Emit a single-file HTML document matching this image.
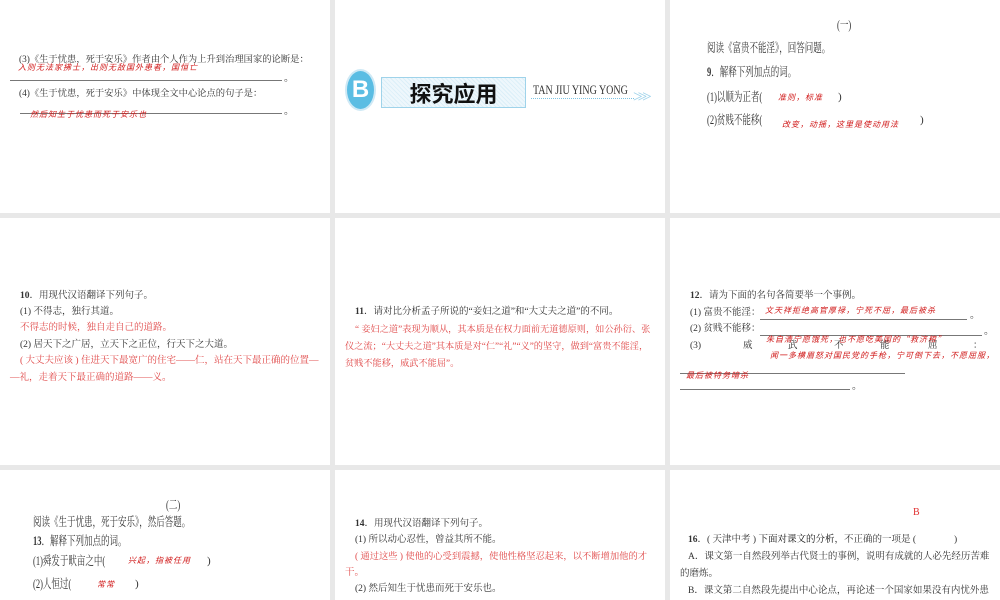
<!DOCTYPE html>
<html><head><meta charset="utf-8"><style>
*{margin:0;padding:0;box-sizing:border-box}
body{width:1000px;height:600px;background:#e8e8e8;position:relative;overflow:hidden;font-family:"Liberation Serif","Noto Serif CJK SC","Noto Sans CJK SC",serif;color:#333}
.p{position:absolute;background:#fff;overflow:hidden}
.t{position:absolute;white-space:nowrap;font-size:10px;line-height:12px}
.c{transform:scaleX(.68);transform-origin:left center;font-size:12.5px !important;line-height:14px}
.r{color:#e03030}
.h{color:#d01818;font-size:8px;font-family:"Noto Sans CJK SC",sans-serif;font-style:italic;letter-spacing:1px}
.ln{position:absolute;height:1px;background:#777}
.rs{color:#e04848;font-size:9.5px}
b{font-weight:bold}
</style></head><body>
<!-- row 1 -->
<div class="p" style="left:0;top:0;width:330px;height:213px">
<div class="t" style="left:19px;top:54px;font-size:9.3px">(3)《生于忧患，死于安乐》作者由个人作为上升到治理国家的论断是：</div>
<div class="t h" style="left:18px;top:62px">入则无法家拂士，出则无敌国外患者，国恒亡</div>
<div class="ln" style="left:10px;top:80px;width:272px"></div><div class="t" style="left:284px;top:73px">。</div>
<div class="t" style="left:19px;top:88px;font-size:9.3px">(4)《生于忧患，死于安乐》中体现全文中心论点的句子是：</div>
<div class="ln" style="left:20px;top:113px;width:262px"></div><div class="t" style="left:284px;top:106px">。</div>
<div class="t h" style="left:30px;top:109px">然后知生于忧患而死于安乐也</div>
</div>
<div class="p" style="left:335px;top:0;width:330px;height:213px">
<div style="position:absolute;left:10px;top:69px;width:31px;height:42px;border-radius:50%;background:#5bbde3;border:2px solid #cfe9f5;color:#fff;font:bold 24px/38px 'Liberation Sans',sans-serif;text-align:center">B</div>
<div style="position:absolute;left:46px;top:77px;width:145px;height:31px;border:1px solid #9fd3ea;background:repeating-linear-gradient(45deg,#eef7fc 0 2px,#dceff8 2px 3px)"></div>
<div class="t" style="left:46px;top:79px;width:145px;text-align:center;font:bold 22px/28px 'Noto Sans CJK SC',sans-serif;color:#111">探究应用</div>
<div class="t" style="left:198px;top:84px;font-size:12.5px;color:#333;transform:scaleX(.8);transform-origin:left">TAN JIU YING YONG</div>
<div style="position:absolute;left:196px;top:98px;width:103px;border-top:1px dotted #7cc3e3"></div>
<div class="t" style="left:298px;top:88px;font-size:17px;line-height:18px;color:#9fd3ea;letter-spacing:-5px">&gt;&gt;&gt;</div>
</div>
<div class="p" style="left:670px;top:0;width:330px;height:213px">
<div class="t c" style="left:167px;top:18px">(一)</div>
<div class="t c" style="left:37px;top:41px">阅读《富贵不能淫》，回答问题。</div>
<div class="t c" style="left:37px;top:65px"><b>9</b>．解释下列加点的词。</div>
<div class="t c" style="left:37px;top:90px">(1)以顺为正者(</div>
<div class="t h" style="left:108px;top:92px">准则，标准</div>
<div class="t" style="left:168px;top:91px;font-size:11px">)</div>
<div class="t c" style="left:37px;top:113px">(2)贫贱不能移(</div>
<div class="t h" style="left:112px;top:119px">改变，动摇，这里是使动用法</div>
<div class="t" style="left:250px;top:114px;font-size:11px">)</div>
</div>
<!-- row 2 -->
<div class="p" style="left:0;top:218px;width:330px;height:247px">
<div class="t" style="left:20px;top:72px;font-size:9.5px"><b>10</b>．用现代汉语翻译下列句子。</div>
<div class="t" style="left:20px;top:88px;font-size:9.5px">(1) 不得志，独行其道。</div>
<div class="t rs" style="left:20px;top:104px">不得志的时候，独自走自己的道路。</div>
<div class="t" style="left:20px;top:121px;font-size:9.5px">(2) 居天下之广居，立天下之正位，行天下之大道。</div>
<div class="t rs" style="left:20px;top:137px">( 大丈夫应该 ) 住进天下最宽广的住宅——仁，站在天下最正确的位置—</div>
<div class="t rs" style="left:10px;top:154px">—礼，走着天下最正确的道路——义。</div>
</div>
<div class="p" style="left:335px;top:218px;width:330px;height:247px">
<div class="t" style="left:20px;top:88px;font-size:9.5px"><b>11</b>．请对比分析孟子所说的“妾妇之道”和“大丈夫之道”的不同。</div>
<div class="t rs" style="left:20px;top:105px;font-size:9.2px">“ 妾妇之道”表现为顺从，其本质是在权力面前无道德原则，如公孙衍、张</div>
<div class="t rs" style="left:10px;top:122px;font-size:9.2px">仪之流；“大丈夫之道”其本质是对“仁”“礼”“义”的坚守，做到“富贵不能淫，</div>
<div class="t rs" style="left:10px;top:139px;font-size:9.2px">贫贱不能移，威武不能屈”。</div>
</div>
<div class="p" style="left:670px;top:218px;width:330px;height:247px">
<div class="t" style="left:20px;top:72px;font-size:9.5px"><b>12</b>．请为下面的名句各简要举一个事例。</div>
<div class="t" style="left:20px;top:89px;font-size:9.5px">(1) 富贵不能淫：</div>
<div class="t h" style="left:95px;top:87px">文天祥拒绝高官厚禄，宁死不屈，最后被杀</div>
<div class="ln" style="left:90px;top:101px;width:207px"></div><div class="t" style="left:300px;top:92px">。</div>
<div class="t" style="left:20px;top:105px;font-size:9.5px">(2) 贫贱不能移：</div>
<div class="ln" style="left:90px;top:117px;width:222px"></div><div class="t" style="left:314px;top:108px">。</div>
<div class="t h" style="left:96px;top:116px">朱自清宁愿饿死，也不愿吃美国的“救济粮”</div>
<div class="t" style="left:20px;top:122px;font-size:9.5px">(3)</div>
<div class="t" style="left:73px;top:122px;font-size:9.5px">威</div>
<div class="t" style="left:118px;top:122px;font-size:9.5px">武</div>
<div class="t" style="left:164px;top:122px;font-size:9.5px">不</div>
<div class="t" style="left:210px;top:122px;font-size:9.5px">能</div>
<div class="t" style="left:258px;top:122px;font-size:9.5px">屈</div>
<div class="t" style="left:303px;top:122px;font-size:9.5px">：</div>
<div class="t h" style="left:100px;top:132px">闻一多横眉怒对国民党的手枪，宁可倒下去，不愿屈服，</div>
<div class="ln" style="left:10px;top:155px;width:225px"></div>
<div class="t h" style="left:16px;top:152px">最后被特务暗杀</div>
<div class="ln" style="left:10px;top:171px;width:170px"></div><div class="t" style="left:182px;top:163px">。</div>
</div>
<!-- row 3 -->
<div class="p" style="left:0;top:470px;width:330px;height:130px">
<div class="t c" style="left:166px;top:28px">(二)</div>
<div class="t c" style="left:33px;top:45px">阅读《生于忧患，死于安乐》，然后答题。</div>
<div class="t c" style="left:33px;top:64px"><b>13</b>．解释下列加点的词。</div>
<div class="t c" style="left:33px;top:84px">(1)舜发于畎亩之中(</div>
<div class="t h" style="left:128px;top:85px">兴起，指被任用</div>
<div class="t" style="left:207px;top:85px;font-size:11px">)</div>
<div class="t c" style="left:33px;top:107px">(2)人恒过(</div>
<div class="t h" style="left:97px;top:109px">常常</div>
<div class="t" style="left:135px;top:108px;font-size:11px">)</div>
</div>
<div class="p" style="left:335px;top:470px;width:330px;height:130px">
<div class="t" style="left:20px;top:48px;font-size:9.5px"><b>14</b>．用现代汉语翻译下列句子。</div>
<div class="t" style="left:20px;top:64px;font-size:9.5px">(1) 所以动心忍性，曾益其所不能。</div>
<div class="t rs" style="left:20px;top:81px;font-size:9.3px">( 通过这些 ) 使他的心受到震撼，使他性格坚忍起来，以不断增加他的才</div>
<div class="t rs" style="left:10px;top:97px">干。</div>
<div class="t" style="left:20px;top:113px;font-size:9.5px">(2) 然后知生于忧患而死于安乐也。</div>
</div>
<div class="p" style="left:670px;top:470px;width:330px;height:130px">
<div class="t r" style="left:243px;top:37px;font-size:10px">B</div>
<div class="t" style="left:18px;top:64px;font-size:9.5px"><b>16</b>．( 天津中考 ) <span style="color:#111">下面对课文的分析</span>，不正确的一项是 (　　　　)</div>
<div class="t" style="left:18px;top:81px;font-size:9.5px">A．课文第一自然段列举古代贤士的事例，说明有成就的人必先经历苦难</div>
<div class="t" style="left:10px;top:98px;font-size:9.5px">的磨炼。</div>
<div class="t" style="left:18px;top:115px;font-size:9.5px">B．课文第二自然段先提出中心论点，再论述一个国家如果没有内忧外患</div>
</div>
</body></html>
